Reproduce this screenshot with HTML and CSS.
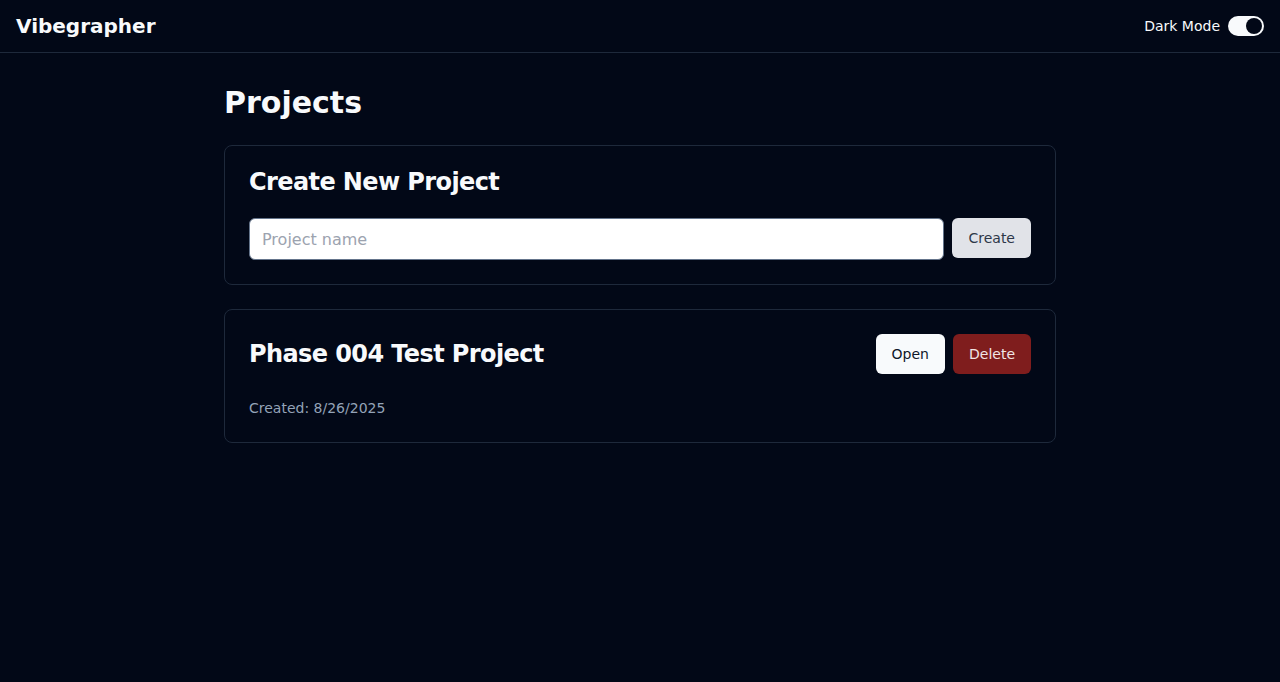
FILE: index.html
```html
<!DOCTYPE html>
<html lang="en">
<head>
<meta charset="utf-8">
<title>Vibegrapher</title>
<link rel="stylesheet" href="styles.css">
</head>
<body>
<header class="topbar">
  <div class="brand">Vibegrapher</div>
  <label class="mode">
    <span class="mode-label">Dark Mode</span>
    <span class="switch"><span class="knob"></span></span>
  </label>
</header>
<main class="container">
  <h1 class="page-title">Projects</h1>
  <section class="card">
    <div class="card-header">
      <h2 class="card-title">Create New Project</h2>
    </div>
    <div class="card-content create-row">
      <input class="input" type="text" placeholder="Project name">
      <button class="btn btn-secondary">Create</button>
    </div>
  </section>
  <section class="card">
    <div class="card-header row">
      <h2 class="card-title">Phase 004 Test Project</h2>
      <div class="actions">
        <button class="btn btn-primary">Open</button>
        <button class="btn btn-danger">Delete</button>
      </div>
    </div>
    <div class="card-content">
      <p class="muted">Created: 8/26/2025</p>
    </div>
  </section>
</main>
</body>
</html>
```
FILE: styles.css
```css
* { box-sizing: border-box; }
html, body {
  margin: 0;
  padding: 0;
  background: #020817;
  color: #f8fafc;
  font-family: "DejaVu Sans", sans-serif;
}
.topbar {
  height: 53px;
  border-bottom: 1px solid #1e293b;
  display: flex;
  align-items: center;
  justify-content: space-between;
  padding: 0 16px;
}
.brand {
  font-size: 20px;
  font-weight: 700;
  line-height: 28px;
}
.mode {
  display: flex;
  align-items: center;
  gap: 8px;
}
.mode-label {
  font-size: 14px;
  line-height: 20px;
}
.switch {
  width: 36px;
  height: 20px;
  border-radius: 10px;
  background: #f8fafc;
  display: flex;
  align-items: center;
  justify-content: flex-end;
  padding: 2px;
}
.knob {
  width: 16px;
  height: 16px;
  border-radius: 50%;
  background: #020817;
}
.container {
  max-width: 832px;
  margin: 0 auto;
  padding-top: 32px;
}
.page-title {
  margin: 0 0 24px;
  font-size: 30px;
  line-height: 36px;
  font-weight: 700;
}
.card {
  border: 1px solid #1e293b;
  border-radius: 8px;
  margin-bottom: 24px;
  background: #020817;
}
.card-header {
  padding: 24px;
}
.card-header.row {
  display: flex;
  align-items: center;
  justify-content: space-between;
}
.card-title {
  margin: -1px 0;
  font-size: 24px;
  line-height: 26px;
  font-weight: 700;
  letter-spacing: -0.6px;
}
.card-content {
  padding: 0 24px 24px;
}
.create-row {
  display: flex;
  gap: 8px;
  align-items: flex-start;
}
.input {
  flex: 1;
  height: 42px;
  border: 1px solid #64748b;
  border-radius: 6px;
  background: #ffffff;
  padding: 0 12px;
  font-family: "DejaVu Sans", sans-serif;
  font-size: 16px;
  color: #0f172a;
  outline: none;
}
.input::placeholder { color: #9ca3af; }
.btn {
  height: 40px;
  padding: 0 16px;
  border: none;
  border-radius: 6px;
  font-family: "DejaVu Sans", sans-serif;
  font-size: 14px;
  cursor: pointer;
}
.btn-secondary {
  background: #e1e3e8;
  color: #2d3748;
}
.btn-primary {
  background: #f8fafc;
  color: #0f172a;
}
.btn-danger {
  background: #7f1d1d;
  color: #f1e4e4;
}
.actions {
  display: flex;
  gap: 8px;
}
.muted {
  margin: 0;
  font-size: 14px;
  line-height: 20px;
  color: #94a3b8;
}
```
